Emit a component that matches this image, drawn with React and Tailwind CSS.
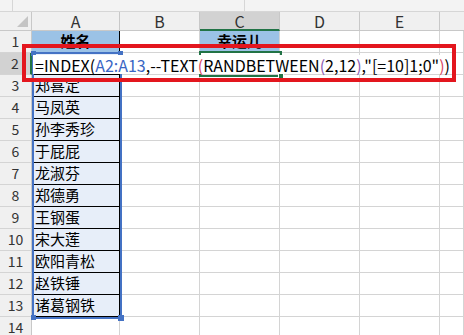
import React from "react";

const names = [
  "郑喜定",
  "马凤英",
  "孙李秀珍",
  "于屁屁",
  "龙淑芬",
  "郑德勇",
  "王钢蛋",
  "宋大莲",
  "欧阳青松",
  "赵铁锤",
  "诸葛钢铁",
];

const cols = ["A", "B", "C", "D", "E"];
const cell = "border-r border-b border-[#d4d4d4]";
const headCell = "flex items-center justify-center text-[#333] text-[16px]";

function Row({ n, children, active }) {
  return (
    <>
      <div
        className={`flex items-center justify-center text-[14px] text-[#333] border-b border-[#d4d4d4] ${
          active ? "bg-[#d2d2d2] border-r-2 border-r-[#217346]" : "bg-[#f0f0f0] border-r border-r-[#c8c8c8]"
        }`}
      >
        {n}
      </div>
      {children}
    </>
  );
}

function Empty({ count }) {
  return Array.from({ length: count }).map((_, i) => <div key={i} className={cell} />);
}

export default function App() {
  return (
    <div
      className="relative w-[464px] h-[335px] overflow-hidden bg-white"
      style={{ fontFamily: "'Noto Sans CJK SC', 'Noto Sans', sans-serif" }}
    >
      {/* strip under the formula bar */}
      <div className="flex h-[12px] bg-[#f3f3f3] border-b border-[#d6d6d6]">
        <div className="w-[13px] border-r border-[#d6d6d6]" />
        <div className="w-[232px] border-r border-[#d6d6d6]" />
      </div>

      <div className="grid grid-cols-[32px_88px_80px_80px_80px_80px_24px] grid-rows-[19px_repeat(14,22px)]">
        {/* column headers */}
        <div className="relative bg-[#f0f0f0] border-r border-b border-[#c8c8c8]">
          <div className="absolute right-[3px] bottom-[3px] w-0 h-0 border-l-[11px] border-l-transparent border-b-[11px] border-b-[#c4c4c4]" />
        </div>
        {cols.map((c) => (
          <div
            key={c}
            className={`${headCell} ${
              c === "C"
                ? "bg-[#d2d2d2] border-r border-[#c8c8c8] border-b-2 border-b-[#217346]"
                : "bg-[#f0f0f0] border-r border-b border-[#c8c8c8]"
            }`}
          >
            {c}
          </div>
        ))}
        <div className="bg-[#f0f0f0] border-b border-[#c8c8c8]" />

        {/* row 1 */}
        <Row n={1}>
          <div className="flex items-center justify-center bg-[#9bc2e6] border-r border-b border-black font-bold text-[15px] text-black">
            姓名
          </div>
          <div className={cell} />
          <div className="flex items-center justify-center bg-[#9bc2e6] border-r border-b border-[#d4d4d4] font-bold text-[15px] text-black">
            幸运儿
          </div>
          <Empty count={3} />
        </Row>

        {/* row 2 */}
        <Row n={2} active>
          <div className="bg-[#e7eef9] border-r border-b border-black" />
          <Empty count={5} />
        </Row>

        {names.map((name, i) => (
          <Row key={name} n={i + 3}>
            <div className="flex items-center pl-[3px] bg-[#e7eef9] border-r border-b border-black text-[15px] text-black whitespace-nowrap">
              {name}
            </div>
            <Empty count={5} />
          </Row>
        ))}

        <Row n={14}>
          <Empty count={6} />
        </Row>
      </div>

      {/* referenced range A2:A13 */}
      <div className="absolute left-[32px] top-[52px] w-[90px] h-[267px] border-2 border-[#4472c4]">
        <div className="absolute -left-[3px] -top-[3px] w-[5px] h-[5px] bg-[#4472c4]" />
        <div className="absolute -right-[3px] -top-[3px] w-[5px] h-[5px] bg-[#4472c4]" />
        <div className="absolute -left-[3px] -bottom-[3px] w-[5px] h-[5px] bg-[#4472c4]" />
        <div className="absolute -right-[4px] -bottom-[4px] w-[6px] h-[6px] bg-[#4472c4]" />
      </div>

      {/* active cell C2 */}
      <div className="absolute left-[199px] top-[51px] w-[83px] h-[26px] border-2 border-[#217346]">
        <div className="absolute -right-[4px] -bottom-[4px] w-[6px] h-[6px] bg-[#217346] border border-white" />
      </div>

      {/* in-cell edit text */}
      <div className="absolute left-[33px] top-[55px] w-[420px] h-[19px] bg-white flex items-center pl-[2px] text-[16px] leading-none text-black whitespace-nowrap">
        <span>=INDEX(</span>
        <span className="text-[#3a66c4]">A2:A13</span>
        <span>,--TEXT</span>
        <span className="text-[#d9485f]">(</span>
        <span>RANDBETWEEN</span>
        <span className="text-[#8a5cb3]">(</span>
        <span>2,12</span>
        <span className="text-[#8a5cb3]">)</span>
        <span>,"[=10]1;0"</span>
        <span className="text-[#d9485f]">)</span>
        <span>)</span>
        <span className="ml-[2px] inline-block w-[1px] h-[20px] bg-black" />
      </div>

      {/* red outline */}
      <div className="absolute left-[22px] top-[44px] w-[434px] h-[38px] border-4 border-[#e3161e]" />
    </div>
  );
}
